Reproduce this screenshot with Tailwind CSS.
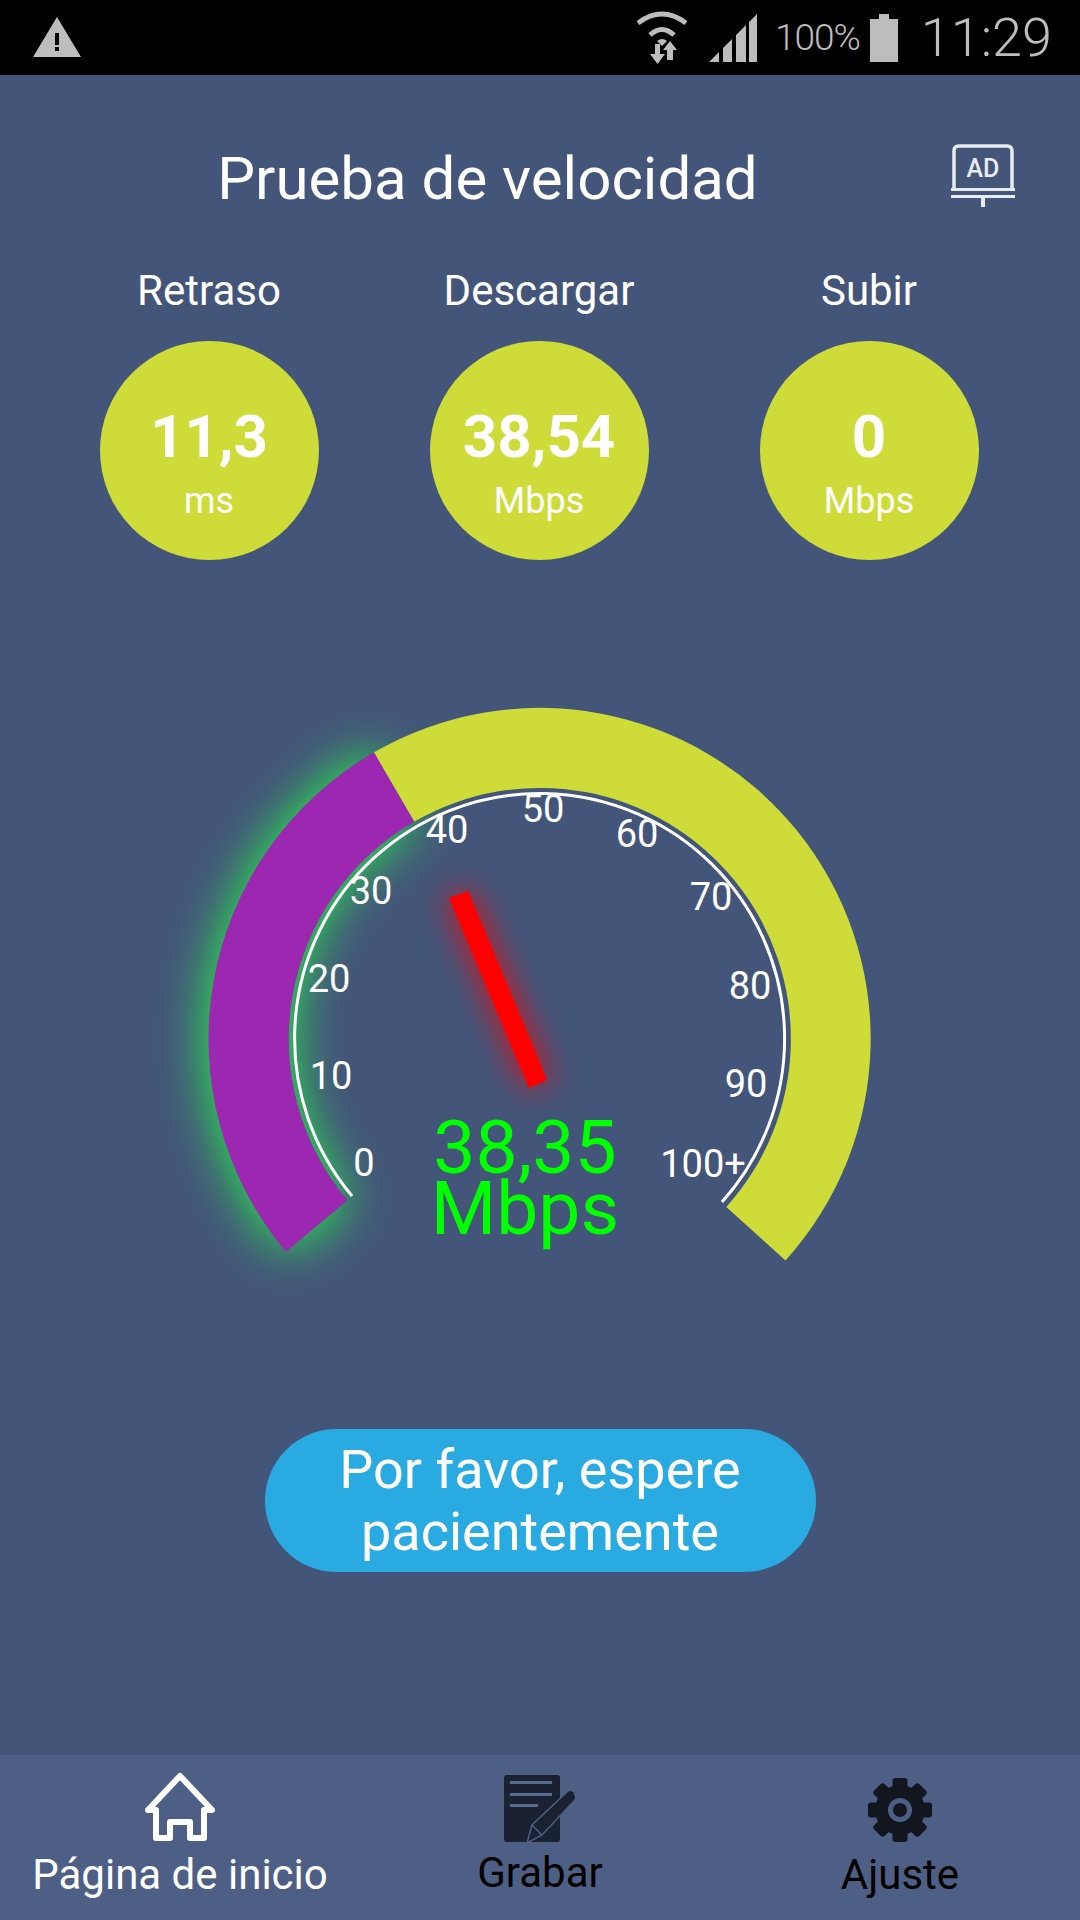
<!DOCTYPE html>
<html lang="es">
<head>
    <meta charset="UTF-8">
    <meta name="viewport" content="width=device-width, initial-scale=1.0">
    <title>Prueba de velocidad</title>
    <script src="https://cdn.jsdelivr.net/npm/@tailwindcss/browser@4"></script>
</head>
<body class="bg-[#44557a] font-['Roboto',sans-serif]">
    <div class="w-[1080px] h-[1920px] flex flex-col overflow-hidden">
        <!-- Status bar -->
        <div class="h-[75px] bg-black flex items-center pl-[33px] pr-[28px] text-[#bdbdbd] font-light">
            <svg class="w-[48px] h-[40px] mt-[-1px]" viewBox="0 0 48 40">
                <path d="M24 0 L48 40 H0 Z" fill="#bdbdbd"/>
                <rect x="22" y="16" width="4" height="12" fill="#000"/>
                <rect x="22" y="30" width="4" height="4" fill="#000"/>
            </svg>
            <div class="flex-1"></div>
            <svg class="w-[50px] h-[54px]" viewBox="0 0 50 54">
                <path d="M1 12 Q25 -6 49 12" fill="none" stroke="#bdbdbd" stroke-width="5"/>
                <path d="M13 24 Q25 13 37 24" fill="none" stroke="#bdbdbd" stroke-width="5"/>
                <path d="M20 30 Q25 26 30 30 L25 35 Z" fill="#bdbdbd"/>
                <path d="M18 33 H23 V43 H28 L20.5 53 L13 43 H18 Z" fill="#bdbdbd"/>
                <path d="M30 49 V39 H26 L33 30 L40 39 H36 V49 Z" fill="#bdbdbd"/>
            </svg>
            <svg class="w-[48px] h-[48px] ml-[22px]" viewBox="0 0 48 48">
                <path d="M0 48 L10 38 V48 Z M14 34 L23 25 V48 H14 Z M27 21 L37 11 V48 H27 Z M40 8 L48 0 V48 H40 Z" fill="#bdbdbd"/>
            </svg>
            <span class="text-[37px] ml-[18px] tracking-[-1px]">100%</span>
            <svg class="w-[28px] h-[48px] ml-[10px]" viewBox="0 0 28 48">
                <path d="M9 0 H19 V5 H28 V48 H0 V5 H9 Z" fill="#bdbdbd"/>
            </svg>
            <span class="text-[54px] ml-[23px]">11:29</span>
        </div>

        <!-- Title -->
        <div class="h-[175px] relative">
            <h1 class="absolute left-0 w-[975px] top-[70px] text-center text-white text-[60px] leading-[68px] font-normal">Prueba de velocidad</h1>
            <svg class="absolute left-[951px] top-[69px] w-[64px] h-[63px]" viewBox="0 0 64 63">
                <path d="M3 45 V7 Q3 2 8 2 H56 Q61 2 61 7 V45" fill="none" stroke="#e8ebf0" stroke-width="3.5"/>
                <rect x="0" y="44" width="64" height="3" fill="#e8ebf0"/>
                <rect x="0" y="51" width="64" height="3" fill="#e8ebf0"/>
                <rect x="30" y="54" width="4" height="9" fill="#e8ebf0"/>
                <text x="32" y="33" text-anchor="middle" font-size="25" font-weight="500" fill="#e8ebf0">AD</text>
            </svg>
        </div>

        <!-- Stats -->
        <div class="grid grid-cols-3 w-[990px] mx-auto ml-[44px] text-white text-center">
            <div class="flex flex-col items-center">
                <div class="text-[42px] leading-[82px]">Retraso</div>
                <div class="w-[219px] h-[219px] rounded-full bg-[#cddc39] flex flex-col items-center mt-[9px]">
                    <div class="text-[60px] font-bold leading-[66px] mt-[63px]">11,3</div>
                    <div class="text-[36px] leading-[38px] mt-[12px]">ms</div>
                </div>
            </div>
            <div class="flex flex-col items-center">
                <div class="text-[42px] leading-[82px]">Descargar</div>
                <div class="w-[219px] h-[219px] rounded-full bg-[#cddc39] flex flex-col items-center mt-[9px]">
                    <div class="text-[60px] font-bold leading-[66px] mt-[63px]">38,54</div>
                    <div class="text-[36px] leading-[38px] mt-[12px]">Mbps</div>
                </div>
            </div>
            <div class="flex flex-col items-center">
                <div class="text-[42px] leading-[82px]">Subir</div>
                <div class="w-[219px] h-[219px] rounded-full bg-[#cddc39] flex flex-col items-center mt-[9px]">
                    <div class="text-[60px] font-bold leading-[66px] mt-[63px]">0</div>
                    <div class="text-[36px] leading-[38px] mt-[12px]">Mbps</div>
                </div>
            </div>
        </div>

        <!-- Gauge, drawn in page coordinates from y=680 -->
        <svg class="block w-[1080px] h-[620px] mt-[120px]" viewBox="0 680 1080 620">
            <path class="drop-shadow-[0_0_26px_#22ff44]" d="M374 752.3 A331 331 0 0 0 286 1251.8 L347.5 1200.3 A251 251 0 0 1 414.3 821.6 Z" fill="#9c27b0"/>
            <path d="M374 752.3 A331 331 0 0 1 785.5 1260.5 L726.3 1207 A251 251 0 0 0 414.3 821.6 Z" fill="#cddc39"/>
            <path d="M352 1196 A245 245 0 1 1 722 1202" fill="none" stroke="#fff" stroke-width="3"/>
            <path class="drop-shadow-[0_0_16px_#ff0000]" d="M449 898 L468 891 L547 1080 L529 1088 Z" fill="#f00"/>
            <g fill="#fff" font-size="38" text-anchor="middle">
                <text x="364" y="1176">0</text>
                <text x="331" y="1089">10</text>
                <text x="329" y="992">20</text>
                <text x="371" y="904">30</text>
                <text x="447" y="843">40</text>
                <text x="543" y="822">50</text>
                <text x="637" y="847">60</text>
                <text x="711" y="910">70</text>
                <text x="750" y="999">80</text>
                <text x="746" y="1097">90</text>
                <text x="703" y="1177">100+</text>
            </g>
            <g fill="#00ff00" font-size="75" text-anchor="middle">
                <text x="525" y="1173">38,35</text>
                <text x="525" y="1234">Mbps</text>
            </g>
        </svg>

        <!-- Button -->
        <div class="mt-[129px] mx-auto w-[551px] h-[143px] rounded-[72px] bg-[#29abe2] text-white text-center text-[54px] leading-[62px] pt-[10px]">Por favor, espere<br>pacientemente</div>

        <div class="flex-1"></div>

        <!-- Bottom nav -->
        <div class="h-[165px] bg-[#4e5f85] grid grid-cols-3 text-center text-[42px] leading-[48px]">
            <div class="flex flex-col items-center pt-[16px] text-white">
                <svg class="w-[72px] h-[72px]" viewBox="0 0 72 72">
                    <path d="M36 5 L68 39 H60 V67 H46 V51 H26 V67 H12 V39 H4 Z" fill="none" stroke="#fff" stroke-width="6" stroke-linejoin="round"/>
                </svg>
                <div class="mt-[8px]">Página de inicio</div>
            </div>
            <div class="flex flex-col items-center pt-[20px] text-black">
                <svg class="w-[72px] h-[68px]" viewBox="0 0 72 68">
                    <rect x="0" y="0" width="56" height="67" rx="3" fill="#1a2130"/>
                    <rect x="6" y="6" width="42" height="3" fill="#5a6b92"/>
                    <rect x="6" y="18" width="42" height="3" fill="#5a6b92"/>
                    <rect x="6" y="29" width="28" height="3" fill="#5a6b92"/>
                    <path d="M64 16 Q67 14 70 17 L71 20 Q73 23 70 26 L38 60 L23 68 L28 50 Z" fill="#1a2130" stroke="#4e5f85" stroke-width="1.5"/>
                    <path d="M28 50 L38 60" stroke="#4e5f85" stroke-width="1.5"/>
                </svg>
                <div class="mt-[6px]">Grabar</div>
            </div>
            <div class="flex flex-col items-center pt-[23px] text-black">
                <svg class="w-[64px] h-[64px]" viewBox="-32 -32 64 64">
                    <g fill="#12161f">
                        <circle r="25"/>
                        <rect x="-7.5" y="-32" width="15" height="14" rx="3"/>
                        <rect x="-7.5" y="-32" width="15" height="14" rx="3" transform="rotate(45)"/>
                        <rect x="-7.5" y="-32" width="15" height="14" rx="3" transform="rotate(90)"/>
                        <rect x="-7.5" y="-32" width="15" height="14" rx="3" transform="rotate(135)"/>
                        <rect x="-7.5" y="-32" width="15" height="14" rx="3" transform="rotate(180)"/>
                        <rect x="-7.5" y="-32" width="15" height="14" rx="3" transform="rotate(225)"/>
                        <rect x="-7.5" y="-32" width="15" height="14" rx="3" transform="rotate(270)"/>
                        <rect x="-7.5" y="-32" width="15" height="14" rx="3" transform="rotate(315)"/>
                    </g>
                    <circle r="9.5" fill="none" stroke="#4e5f85" stroke-width="5"/>
                </svg>
                <div class="mt-[9px]">Ajuste</div>
            </div>
        </div>
    </div>
</body>
</html>
